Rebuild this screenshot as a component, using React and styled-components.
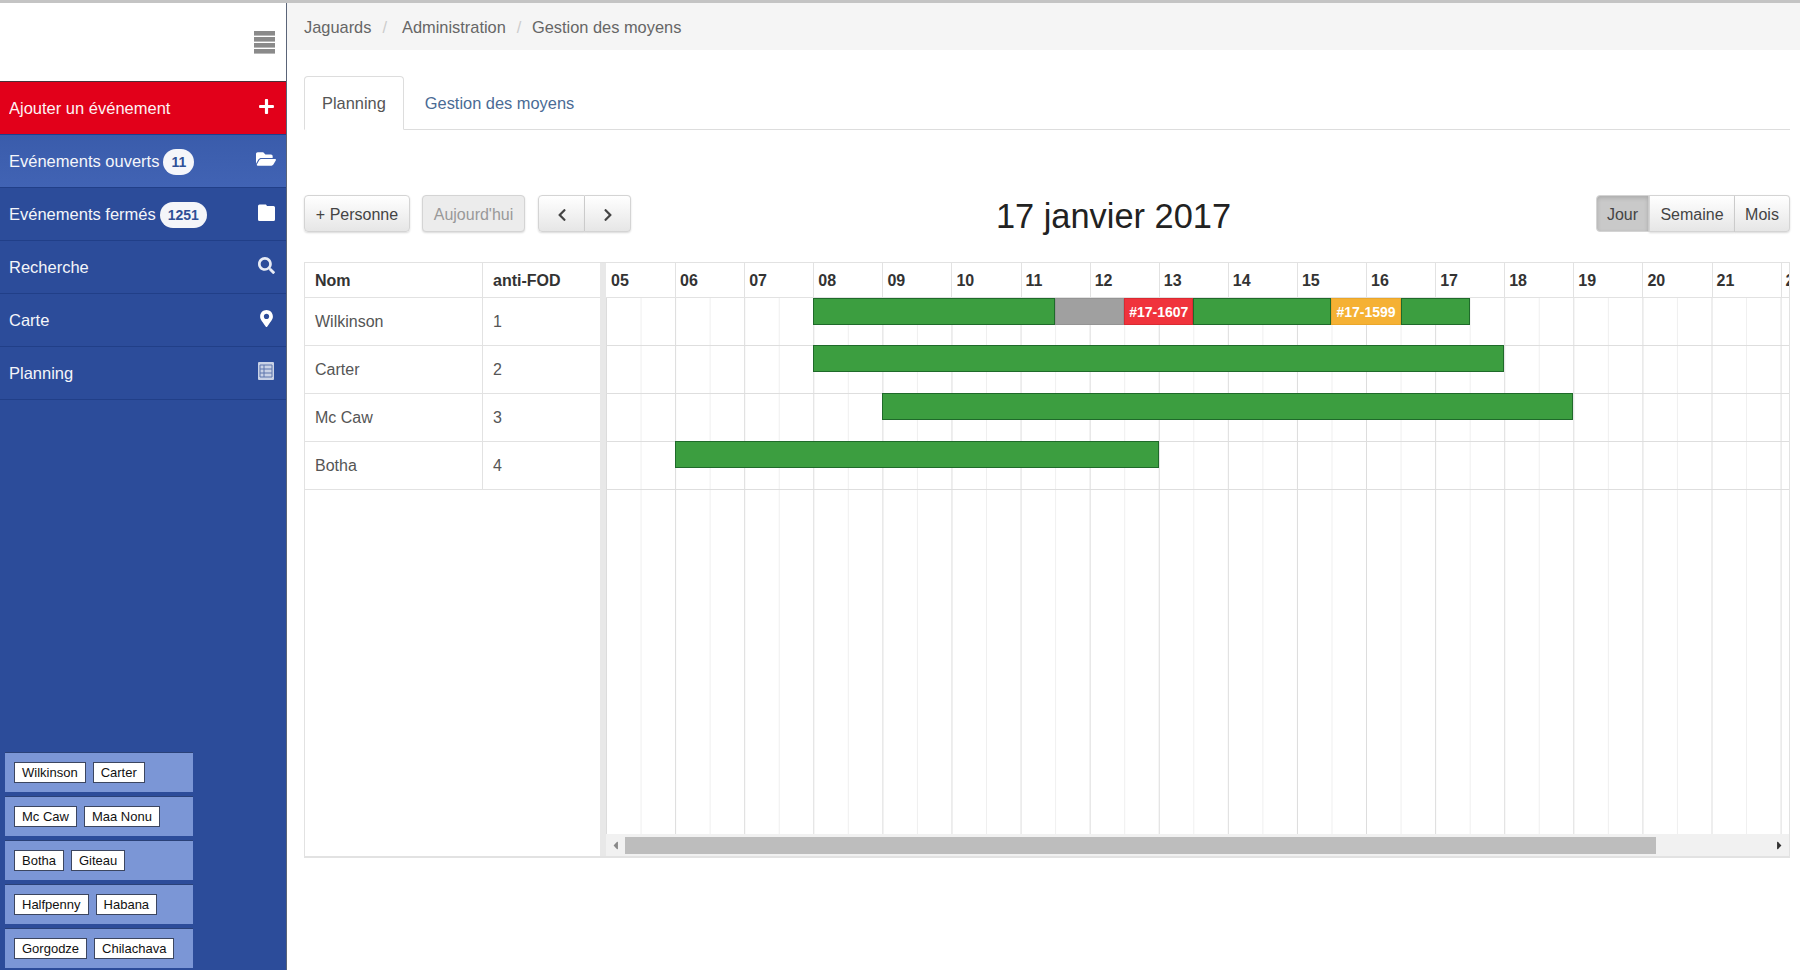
import React from 'react';
import styled, { createGlobalStyle } from 'styled-components';
import { FaPlus, FaFolderOpen, FaSearch, FaMapMarkerAlt, FaChevronLeft, FaChevronRight, FaCaretLeft, FaCaretRight } from 'react-icons/fa';

const HOUR = 69.1;

const GlobalStyle = createGlobalStyle`
  html, body {
    margin: 0;
    padding: 0;
    height: 100%;
    overflow: hidden;
    background: #fff;
    font-family: 'Liberation Sans', Arial, sans-serif;
  }
  * { box-sizing: border-box; }
`;

const Page = styled.div`
  display: flex;
  width: 1800px;
  height: 970px;
  overflow: hidden;
  border-top: 3px solid #c4c4c4;
`;

// menu de gauche
const Sidebar = styled.aside`
  width: 287px;
  flex-shrink: 0;
  display: flex;
  flex-direction: column;
  background: #2c4c9a;
  border-right: 1px solid #5a6478;
`;

const SideHead = styled.div`
  height: 79px;
  flex-shrink: 0;
  background: #fff;
  display: flex;
  align-items: center;
  justify-content: flex-end;
  padding: 0 11px 0 0;
  border-bottom: 1px solid #4a3038;
`;

const MenuItem = styled.div`
  height: 53px;
  flex-shrink: 0;
  display: flex;
  align-items: center;
  padding: 1px 9px 0 9px;
  color: #fff;
  font-size: 16.5px;
  background: ${p => p.$bg || 'transparent'};
  border-bottom: 1px solid ${p => p.$line || '#213f88'};
`;

const MenuLabel = styled.span`
  flex: 1;
  display: flex;
  align-items: center;
  gap: 4px;
  opacity: 0.95;
`;

const Badge = styled.span`
  background: #fff;
  color: #2f5096;
  font-weight: bold;
  font-size: 14px;
  line-height: 26px;
  height: 26px;
  padding: 0 8px;
  border-radius: 13px;
`;

const MenuIcon = styled.span`
  width: 22px;
  display: flex;
  justify-content: center;
  margin-top: -5px;
  color: ${p => p.$color || '#fff'};
  font-size: ${p => p.$size || 17}px;
`;

const Squads = styled.div`
  margin-top: auto;
  margin-bottom: 2px;
  width: 193px;
  padding-left: 5px;
  display: flex;
  flex-direction: column;
  gap: 4px;
`;

const Squad = styled.div`
  height: 40px;
  background: #7b96d6;
  border-top: 1px solid #2a4178;
  display: flex;
  align-items: center;
  gap: 7px;
  padding-left: 9px;
`;

const Chip = styled.span`
  height: 21px;
  line-height: 19px;
  padding: 0 7px;
  font-size: 13px;
  color: #111;
  background: #fff;
  border: 1px solid #3c4660;
`;

// contenu
const Main = styled.main`
  flex: 1;
  min-width: 0;
`;

const Breadcrumb = styled.nav`
  height: 47px;
  background: #f5f5f5;
  display: flex;
  align-items: center;
  padding: 2px 0 0 17px;
  font-size: 16.4px;
  color: #666;
`;

const Sep = styled.span`
  color: #ccc;
  margin: 0 ${p => p.$right}px 0 11px;
`;

const Content = styled.div`
  padding: 0 10px 0 17px;
`;

const Tabs = styled.div`
  margin-top: 26px;
  height: 54px;
  display: flex;
  gap: 3px;
  border-bottom: 1px solid #ddd;
`;

const Tab = styled.div`
  height: 54px;
  padding: 1px 17px 0;
  display: flex;
  align-items: center;
  font-size: 16.4px;
  color: ${p => (p.$active ? '#555' : '#4a6b95')};
  background: ${p => (p.$active ? '#fff' : 'transparent')};
  border: 1px solid ${p => (p.$active ? '#ddd' : 'transparent')};
  border-bottom-color: ${p => (p.$active ? '#fff' : 'transparent')};
  border-radius: 4px 4px 0 0;
`;

const Toolbar = styled.div`
  margin-top: 65px;
  height: 37px;
  display: flex;
  align-items: center;
  justify-content: space-between;
`;

const Group = styled.div`
  display: flex;
  gap: 12px;
`;

const Title = styled.h2`
  margin: 0;
  font-size: 34.4px;
  font-weight: normal;
  color: #222;
  line-height: 37px;
  position: relative;
  top: 3px;
`;

const Btn = styled.button`
  height: 37px;
  padding: 2px 0 0;
  width: ${p => p.$w}px;
  display: flex;
  align-items: center;
  justify-content: center;
  font-family: inherit;
  font-size: 16px;
  color: ${p => (p.$disabled ? '#999' : '#444')};
  background: ${p => p.$active ? '#c9c9c9' : p.$disabled ? '#ececec' : 'linear-gradient(#fff, #e6e6e6)'};
  border: 1px solid #d4d4d4;
  border-radius: 4px;
  box-shadow: ${p => p.$active ? 'inset 0 2px 4px rgba(0,0,0,0.15)' : '0 1px 2px rgba(0,0,0,0.15)'};
`;

const BtnGroup = styled.div`
  display: flex;
  ${Btn} { border-radius: 0; }
  ${Btn}:first-child { border-radius: 4px 0 0 4px; }
  ${Btn}:last-child { border-radius: 0 4px 4px 0; border-left: none; }
`;

const NavGroup = styled(BtnGroup)`
  margin-left: 1px;
`;

const Scheduler = styled.section`
  margin-top: 30px;
  height: 596px;
  display: flex;
  border: 1px solid #e2e2e2;
  border-bottom-width: 2px;
  overflow: hidden;
`;

const LeftPane = styled.div`
  width: 295px;
  flex-shrink: 0;
`;

const Divider = styled.div`
  width: 6px;
  flex-shrink: 0;
  background: #e8e8e8;
`;

const NameRow = styled.div`
  height: ${p => (p.$head ? 35 : 48)}px;
  display: grid;
  grid-template-columns: 177px 1fr;
  border-bottom: 1px solid #e2e2e2;
  font-size: 16px;
  color: ${p => (p.$head ? '#333' : '#555')};
  font-weight: ${p => (p.$head ? 'bold' : 'normal')};
`;

const NameCell = styled.div`
  display: flex;
  align-items: center;
  padding: ${p => (p.$head ? 2 : 1)}px 0 0 10px;
  & + & { border-left: 1px solid #e2e2e2; }
`;

const RightPane = styled.div`
  flex: 1;
  min-width: 0;
  display: flex;
  flex-direction: column;
`;

const HourHead = styled.div`
  height: 35px;
  flex-shrink: 0;
  display: flex;
  border-bottom: 1px solid #e2e2e2;
`;

const Hour = styled.div`
  width: ${HOUR}px;
  flex-shrink: 0;
  padding: 2px 0 0 4px;
  display: flex;
  align-items: center;
  font-size: 16px;
  font-weight: bold;
  color: #333;
  border-left: 1px solid ${p => (p.$first ? 'transparent' : '#e2e2e2')};
`;

const Timeline = styled.div`
  flex: 1;
  min-height: 0;
  background-image:
    linear-gradient(to right, #dcdcdc 1px, transparent 1px),
    linear-gradient(to right, #efefef 1px, transparent 1px);
  background-size: ${HOUR}px 100%, ${HOUR}px 100%;
  background-position: 0 0, ${HOUR / 2}px 0;
`;

const Bar = styled.div`
  grid-row: 1;
  grid-column: ${p => p.$from + 1} / ${p => p.$to + 1};
  height: 27px;
  background: ${p => p.$bg};
  border: 1px solid ${p => p.$line};
  color: #fff;
  font-size: 14px;
  font-weight: bold;
  white-space: nowrap;
  display: flex;
  align-items: center;
  justify-content: center;
  overflow: hidden;
`;

const GanttRow = styled.div`
  height: 48px;
  display: grid;
  grid-template-columns: repeat(36, ${HOUR / 2}px);
  grid-template-rows: 27px;
  border-bottom: 1px solid #dedede;
  &:not(:first-child) ${Bar} { margin-top: -1px; }
`;

const Scrollbar = styled.div`
  height: 22px;
  flex-shrink: 0;
  display: flex;
  align-items: center;
  background: #f1f1f1;
  font-size: 13px;
`;

const Arrow = styled.span`
  width: 19px;
  display: flex;
  justify-content: center;
  color: ${p => p.$color};
`;

const Thumb = styled.div`
  width: 1031px;
  height: 17px;
  background: #bdbdbd;
`;

const Filler = styled.span`
  flex: 1;
`;

const HamburgerIcon = () => (
  <svg width="21" height="23" viewBox="0 0 21 23" fill="#8a8a8a">
    <rect y="0" width="21" height="4.6" />
    <rect y="6" width="21" height="4.6" />
    <rect y="12" width="21" height="4.6" />
    <rect y="18" width="21" height="4.6" />
  </svg>
);

const FolderIcon = () => (
  <svg width="17" height="17" viewBox="0 0 17 17" fill="#fff">
    <path d="M1.5 0.5h6.5l1 1.5h6.5a1.5 1.5 0 0 1 1.5 1.5v12a1.5 1.5 0 0 1-1.5 1.5h-14a1.5 1.5 0 0 1-1.5-1.5v-13.5a1.5 1.5 0 0 1 1.5-1.5z" />
  </svg>
);

const PlanningIcon = () => (
  <svg width="16" height="18" viewBox="0 0 16 18">
    <rect width="16" height="18" fill="#c9d2e6" rx="1" />
    <path d="M2 3h12v12H2zM2 7h12M2 11h12M6 3v12" fill="none" stroke="#5c74ac" strokeWidth="1" />
  </svg>
);

const squads = [
  ['Wilkinson', 'Carter'],
  ['Mc Caw', 'Maa Nonu'],
  ['Botha', 'Giteau'],
  ['Halfpenny', 'Habana'],
  ['Gorgodze', 'Chilachava'],
];

const GREEN = { bg: '#3c9e40', line: '#1f6a2a' };

const people = [
  {
    name: 'Wilkinson',
    rank: 1,
    bars: [
      { from: 6, to: 13, ...GREEN },
      { from: 13, to: 15, bg: '#a0a0a0', line: '#949494' },
      { from: 15, to: 17, bg: '#f0333c', line: '#d92a32', label: '#17-1607' },
      { from: 17, to: 21, ...GREEN },
      { from: 21, to: 23, bg: '#f5b134', line: '#eaa62a', label: '#17-1599' },
      { from: 23, to: 25, ...GREEN },
    ],
  },
  { name: 'Carter', rank: 2, bars: [{ from: 6, to: 26, ...GREEN }] },
  { name: 'Mc Caw', rank: 3, bars: [{ from: 8, to: 28, ...GREEN }] },
  { name: 'Botha', rank: 4, bars: [{ from: 2, to: 16, ...GREEN }] },
];

const hours = ['05', '06', '07', '08', '09', '10', '11', '12', '13', '14', '15', '16', '17', '18', '19', '20', '21', '22'];

const App = () => (
  <Page>
    <GlobalStyle />
    <Sidebar>
      <SideHead><HamburgerIcon /></SideHead>
      <MenuItem $bg="#e2001a" $line="#1f3f8c">
        <MenuLabel>Ajouter un événement</MenuLabel>
        <MenuIcon><FaPlus /></MenuIcon>
      </MenuItem>
      <MenuItem $bg="linear-gradient(#3a5cab, #4163b4)">
        <MenuLabel>Evénements ouverts <Badge>11</Badge></MenuLabel>
        <MenuIcon $size={20}><FaFolderOpen /></MenuIcon>
      </MenuItem>
      <MenuItem>
        <MenuLabel>Evénements fermés <Badge>1251</Badge></MenuLabel>
        <MenuIcon><FolderIcon /></MenuIcon>
      </MenuItem>
      <MenuItem>
        <MenuLabel>Recherche</MenuLabel>
        <MenuIcon $color="#e8ecf5"><FaSearch /></MenuIcon>
      </MenuItem>
      <MenuItem>
        <MenuLabel>Carte</MenuLabel>
        <MenuIcon><FaMapMarkerAlt /></MenuIcon>
      </MenuItem>
      <MenuItem>
        <MenuLabel>Planning</MenuLabel>
        <MenuIcon><PlanningIcon /></MenuIcon>
      </MenuItem>
      <Squads>
        {squads.map(pair => (
          <Squad key={pair[0]}>
            {pair.map(n => <Chip key={n}>{n}</Chip>)}
          </Squad>
        ))}
      </Squads>
    </Sidebar>
    <Main>
      <Breadcrumb>
        Jaguards<Sep $right={15}>/</Sep>Administration<Sep $right={10.5}>/</Sep>Gestion des moyens
      </Breadcrumb>
      <Content>
        <Tabs>
          <Tab $active>Planning</Tab>
          <Tab>Gestion des moyens</Tab>
        </Tabs>
        <Toolbar>
          <Group>
            <Btn $w={106}>+ Personne</Btn>
            <Btn $w={103} $disabled>Aujourd'hui</Btn>
            <NavGroup>
              <Btn $w={47}><FaChevronLeft size={14} /></Btn>
              <Btn $w={46}><FaChevronRight size={14} /></Btn>
            </NavGroup>
          </Group>
          <Title>17 janvier 2017</Title>
          <BtnGroup>
            <Btn $w={53} $active>Jour</Btn>
            <Btn $w={86}>Semaine</Btn>
            <Btn $w={55}>Mois</Btn>
          </BtnGroup>
        </Toolbar>
        <Scheduler>
          <LeftPane>
            <NameRow $head>
              <NameCell $head>Nom</NameCell>
              <NameCell $head>anti-FOD</NameCell>
            </NameRow>
            {people.map(p => (
              <NameRow key={p.name}>
                <NameCell>{p.name}</NameCell>
                <NameCell>{p.rank}</NameCell>
              </NameRow>
            ))}
          </LeftPane>
          <Divider />
          <RightPane>
            <HourHead>
              {hours.map((h, i) => <Hour key={h} $first={i === 0}>{h}</Hour>)}
            </HourHead>
            <Timeline>
              {people.map(p => (
                <GanttRow key={p.name}>
                  {p.bars.map(b => (
                    <Bar key={b.from} $from={b.from} $to={b.to} $bg={b.bg} $line={b.line}>{b.label}</Bar>
                  ))}
                </GanttRow>
              ))}
            </Timeline>
            <Scrollbar>
              <Arrow $color="#888"><FaCaretLeft /></Arrow>
              <Thumb />
              <Filler />
              <Arrow $color="#333"><FaCaretRight /></Arrow>
            </Scrollbar>
          </RightPane>
        </Scheduler>
      </Content>
    </Main>
  </Page>
);

export default App;
